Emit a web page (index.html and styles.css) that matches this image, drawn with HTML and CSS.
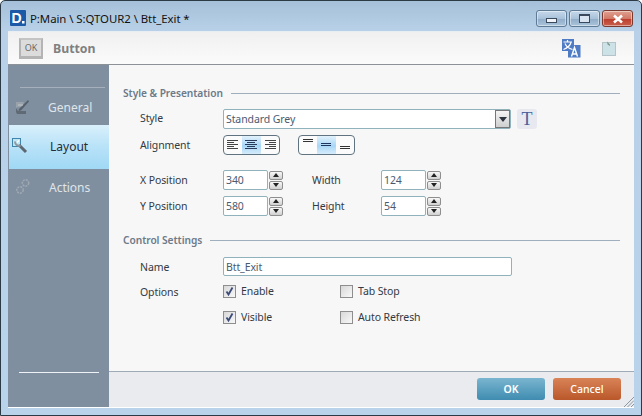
FILE: index.html
```html
<!DOCTYPE html>
<html lang="en">
<head>
<meta charset="utf-8">
<title>Btt_Exit</title>
<link rel="stylesheet" href="styles.css">
</head>
<body>
<div class="window">
  <div class="titlebar">
    <svg class="app-icon" width="16" height="16" viewBox="0 0 16 16"><rect width="16" height="16" rx="1" fill="#1c5aa8"/><text x="1.500" y="13" class="app-d">D</text><rect x="12" y="11" width="2.500" height="2.500" fill="#fff"/></svg>
    <span class="title">P:Main \ S:QTOUR2 \ Btt_Exit *</span>
    <div class="caption">
      <div class="cap cap-min"><span class="glyph-min"></span></div>
      <div class="cap cap-max"><span class="glyph-max"></span></div>
      <div class="cap cap-close"><svg width="14" height="10" viewBox="0 0 14 10"><path d="M3 1.500 L11 8.500 M11 1.500 L3 8.500" stroke="#fff" stroke-width="2.600"/></svg></div>
    </div>
  </div>
  <div class="client">
    <header class="head">
      <div class="ok-icon">OK</div>
      <span class="head-title">Button</span>
      <svg class="translate" width="19" height="19" viewBox="0 0 19 19">
        <path d="M0 0H12V6H18.500V18.500H6V12H0Z" fill="#4f7cc4"/>
        <path d="M1.500 3H10M5.500 1V3M3 4.500C4.500 8 7 9.500 10.500 10.500M9 3.500C8 7 5.500 9 1.500 10.500" stroke="#fff" stroke-width="1.200" fill="none"/>
        <path d="M9.500 17.500L12.500 8.500L15.500 17.500M10.500 15H14.500" stroke="#fff" stroke-width="1.400" fill="none"/>
      </svg>
      <svg class="note" width="14" height="15" viewBox="0 0 14 15"><rect x="0.500" y="1.500" width="13" height="13" fill="#cde2e6" stroke="#b4c4c8"/><path d="M5 0.500L8 3.500V5L5.500 3.500Z" fill="#7f998f"/></svg>
    </header>
    <div class="body">
      <nav class="side">
        <div class="side-rule"></div>
        <div class="nav-item nav-general">
          <svg class="nav-icon" width="15" height="16" viewBox="0 0 15 16"><path d="M1 9L3 12H11V15H2L1 13Z" fill="#5f6a75"/><path d="M1 3H9L7 8H3L1 9Z" fill="#99a2ab"/><path d="M4 10L13 1L14 2.500L6 11.500L3.500 12Z" fill="#56606b"/><path d="M3 6H8" stroke="#c0c7cd"/></svg>
          <span>General</span>
        </div>
        <div class="nav-item nav-layout">
          <svg class="nav-icon" width="16" height="16" viewBox="0 0 16 16"><rect x="0.500" y="0.500" width="8" height="8" fill="#bfe4f2" stroke="#3f85ad"/><path d="M7 7L14 14" stroke="#5d6772" stroke-width="3"/><path d="M3 3.500C3 7 6 8.500 8.500 7.500" stroke="#8e98a2" stroke-width="2" fill="none"/><path d="M7 2.500L5 4.500" stroke="#fff" stroke-width="1.400"/></svg>
          <span>Layout</span>
        </div>
        <div class="nav-item nav-actions">
          <svg class="nav-icon" width="16" height="17" viewBox="0 0 16 17"><circle cx="10.500" cy="5" r="3.200" fill="none" stroke="#a0a9b2" stroke-width="1.500" stroke-dasharray="2 1"/><circle cx="5" cy="12" r="3.200" fill="none" stroke="#a0a9b2" stroke-width="1.500" stroke-dasharray="2 1"/></svg>
          <span>Actions</span>
        </div>
        <div class="side-spacer"></div>
        <div class="side-foot"></div>
      </nav>
      <div class="main">
        <section class="content">
          <h2 class="sect sect-first"><span>Style &amp; Presentation</span><i></i></h2>
          <div class="row row-style">
            <label class="lbl lbl-up">Style</label>
            <div class="field select">
              <span class="val">Standard Grey</span>
              <span class="drop"><b></b></span>
            </div>
            <div class="t-btn">T</div>
          </div>
          <div class="row row-align">
            <label class="lbl">Alignment</label>
            <div class="seg">
              <span class="seg-btn"><svg width="12" height="10" viewBox="0 0 12 10"><path d="M0 .5H11M0 2.500H7M0 4.500H11M0 6.500H7M0 8.500H11" stroke="#444"/></svg></span>
              <span class="seg-btn on"><svg width="12" height="10" viewBox="0 0 12 10"><path d="M0 .5H12M2 2.500H10M0 4.500H12M2 6.500H10M0 8.500H12" stroke="#2a3a5a"/></svg></span>
              <span class="seg-btn"><svg width="12" height="10" viewBox="0 0 12 10"><path d="M1 .5H12M5 2.500H12M1 4.500H12M5 6.500H12M1 8.500H12" stroke="#444"/></svg></span>
            </div>
            <div class="seg seg-v">
              <span class="seg-btn"><svg width="12" height="14" viewBox="0 0 12 14"><path d="M1 1.500H11M1 3.500H11" stroke="#333"/></svg></span>
              <span class="seg-btn on"><svg width="12" height="14" viewBox="0 0 12 14"><path d="M1 5.500H11M1 7.500H11" stroke="#1f3560"/></svg></span>
              <span class="seg-btn"><svg width="12" height="14" viewBox="0 0 12 14"><path d="M1 8.500H11M1 10.500H11" stroke="#333"/></svg></span>
            </div>
          </div>
          <div class="row row-pos1">
            <label class="lbl">X Position</label>
            <div class="spin"><div class="field num">340</div><div class="arrows"><span class="up"></span><span class="down"></span></div></div>
            <label class="lbl2">Width</label>
            <div class="spin"><div class="field num">124</div><div class="arrows"><span class="up"></span><span class="down"></span></div></div>
          </div>
          <div class="row row-pos2">
            <label class="lbl">Y Position</label>
            <div class="spin"><div class="field num">580</div><div class="arrows"><span class="up"></span><span class="down"></span></div></div>
            <label class="lbl2">Height</label>
            <div class="spin"><div class="field num">54</div><div class="arrows"><span class="up"></span><span class="down"></span></div></div>
          </div>
          <h2 class="sect sect-second"><span>Control Settings</span><i></i></h2>
          <div class="row row-name">
            <label class="lbl">Name</label>
            <div class="field name"><span class="val">Btt_Exit</span></div>
          </div>
          <div class="row row-opt1">
            <label class="lbl lbl-down">Options</label>
            <div class="check c1"><span class="box"><svg width="11" height="11" viewBox="0 0 11 11"><path d="M2.500 5.500L4.500 8.500L8.500 1.500" stroke="#3c4c7a" stroke-width="1.800" fill="none"/></svg></span>Enable</div>
            <div class="check"><span class="box"></span>Tab Stop</div>
          </div>
          <div class="row row-opt2">
            <span class="lbl"></span>
            <div class="check c1"><span class="box"><svg width="11" height="11" viewBox="0 0 11 11"><path d="M2.500 5.500L4.500 8.500L8.500 1.500" stroke="#3c4c7a" stroke-width="1.800" fill="none"/></svg></span>Visible</div>
            <div class="check"><span class="box"></span>Auto Refresh</div>
          </div>
        </section>
        <footer class="foot">
          <div class="btn btn-ok">OK</div>
          <div class="btn btn-cancel">Cancel</div>
          <svg class="grip" width="11" height="11" viewBox="0 0 11 11"><path d="M1 11L11 1M4.500 11L11 4.500M8 11L11 8" stroke="#8c96a0"/></svg>
        </footer>
      </div>
    </div>
  </div>
</div>
</body>
</html>
```
FILE: styles.css
```css
* { box-sizing: border-box; }
html, body { margin: 0; padding: 0; }
body { width: 642px; height: 416px; overflow: hidden; background: #fff; font-family: "Noto Sans", "Liberation Sans", sans-serif; font-size: 10.500px; letter-spacing: -0.1px; color: #3d4450; }
.window { width: 642px; height: 416px; display: flex; flex-direction: column; border: 1px solid #2b3a44; border-radius: 5px 5px 0 0; background: linear-gradient(180deg, #a5c0d9 0, #b8d1e8 30px, #b9d3ea 100%); padding: 0 7px 7px 7px; }
.titlebar { height: 30px; flex: none; display: flex; align-items: flex-start; position: relative; }
.app-icon { margin: 9px 0 0 2px; flex: none; }
.app-d { font: bold 14px "Liberation Sans", sans-serif; fill: #fff; letter-spacing: 0; }
.title { margin: 9px 0 0 4px; font-size: 11.400px; line-height: 17px; color: #111; letter-spacing: -0.05px; }
.caption { position: absolute; right: 1px; top: 9px; display: flex; gap: 2px; }
.cap { width: 31px; height: 17px; display: flex; align-items: center; justify-content: center; border: 1px solid #5f7a94; border-radius: 3px; background: linear-gradient(180deg, #c5d8ea 0, #a9c2da 50%, #8fabc6 51%, #aac4dc 100%); box-shadow: inset 0 0 0 1px rgba(255,255,255,.45); }
.cap-close { border-color: #7a3a30; background: linear-gradient(180deg, #e0a090 0, #d27a68 50%, #bb3c2c 51%, #c9604c 100%); }
.glyph-min { width: 11px; height: 5px; margin-top: 4px; border: 1px solid #3a4a5c; background: #f0f4f8; }
.glyph-max { width: 11px; height: 9px; border: 2px solid #3a4a5c; background: #d8e4f0; border-width: 2px 1px 1px; }
.client { flex: 1; min-height: 0; display: flex; flex-direction: column; background: #f7f7f7; border-bottom: 1px solid #fff; }
.head { height: 34px; flex: none; display: flex; align-items: center; background: linear-gradient(180deg, #f0f0f0 0, #fbfbfb 100%); border-bottom: 1px solid #8c9298; border-top: 1px solid #e8eef4; padding-left: 11px; }
.ok-icon { width: 24px; height: 21px; display: flex; align-items: center; justify-content: center; background: #dcdcdc; border: 2px solid #b4b4b4; border-top-color: #c4c4c4; border-bottom-width: 3px; font-size: 9px; color: #6a6a6a; letter-spacing: 0; }
.head-title { margin-left: 10px; font-size: 12.300px; font-weight: 700; color: #808080; letter-spacing: 0; }
.translate { margin-left: auto; margin-right: 21px; }
.note { margin-right: 18px; }
.body { flex: 1; min-height: 0; display: flex; }
.side { width: 101px; flex: none; background: #7f8fa0; display: flex; flex-direction: column; }
.side-rule { height: 1px; margin: 22px 4px 0 12px; background: #a5b0bc; flex: none; }
.nav-item { display: flex; align-items: center; position: relative; font-size: 12px; flex: none; color: #dfe5ea; letter-spacing: 0; }
.nav-icon { position: absolute; left: 7px; }
.nav-general { height: 37px; padding: 2px 0 0 40px; }
.nav-general .nav-icon { top: 11px; }
.nav-layout { height: 44px; padding: 0 0 2px 41px; margin-left: 1px; color: #262d36; background: linear-gradient(180deg, #d9f0fb 0, #b8e2f8 50%, #a0d8f5 100%); }
.nav-layout .nav-icon { left: 3px; top: 13px; }
.nav-actions { height: 38px; padding: 0 0 2px 41px; }
.nav-actions .nav-icon { top: 9px; }
.side-spacer { flex: 1; }
.side-foot { height: 1px; margin: 0 10px 34px 11px; background: #eef2f5; flex: none; }
.main { flex: 1; min-width: 0; display: flex; flex-direction: column; }
.content { flex: 1; min-height: 0; padding: 21px 0 0 14px; background: #f7f7f7; }
.sect { display: flex; align-items: center; margin: 0; font-size: 10.200px; font-weight: 600; color: #6d7a88; height: 14px; padding-right: 14px; letter-spacing: -0.05px; }
.sect i { flex: 1; height: 1px; margin-left: 8px; background: #a0afbd; }
.sect-second { margin-top: 17px; }
.row { display: flex; align-items: center; padding-left: 17px; height: 20px; }
.row-style { margin-top: 9px; }
.row-align { margin-top: 6px; }
.row-pos1 { margin-top: 15px; }
.row-pos2 { margin-top: 6px; }
.row-name { margin-top: 10px; height: 19px; }
.row-opt1 { margin-top: 5px; }
.row-opt2 { margin-top: 6px; }
.lbl { width: 83px; flex: none; color: #333a44; }
.lbl-up { padding-bottom: 2px; }
.lbl-down { padding-top: 2px; }
.lbl2 { width: 69px; margin-left: 29px; flex: none; color: #333a44; }
.field { height: 20px; background: #fff; border: 1px solid #8fb2bd; border-radius: 2px; color: #4a5a70; display: flex; align-items: center; padding-left: 2px; }
.select { width: 288px; position: relative; }
.drop { position: absolute; right: 0; top: 0; bottom: 0; width: 15px; display: flex; align-items: center; justify-content: center; background: linear-gradient(180deg, #f4f4f4, #cfcfcf); border: 1px solid #777; }
.drop b { width: 0; height: 0; border: 4px solid transparent; border-top: 5px solid #2c3440; border-bottom: 0; }
.t-btn { width: 20px; height: 20px; margin-left: 6px; border-radius: 3px; background: #e8e9f0; font-family: "Liberation Serif", serif; font-size: 18px; line-height: 20px; text-align: center; color: #47619a; }
.seg { display: flex; height: 20px; width: 57px; border: 1px solid #5f7480; border-radius: 4px; background: #fbfbfb; overflow: hidden; }
.seg-v { margin-left: 18px; }
.seg-btn { flex: 1; display: flex; align-items: center; justify-content: center; }
.seg-btn.on { background: linear-gradient(180deg, #e2f2fc, #a8d6f6 55%, #d6ecfb); }
.spin { display: flex; align-items: center; }
.num { width: 45px; }
.arrows { width: 14px; margin-left: 1px; display: flex; flex-direction: column; gap: 1px; height: 19px; }
.arrows span { flex: 1; display: flex; align-items: center; justify-content: center; background: linear-gradient(180deg, #f8f8f8, #d0d0d0); border: 1px solid #8e8e8e; border-radius: 2px; }
.arrows .up::after { content: ""; border: 3px solid transparent; border-bottom: 4px solid #222; border-top: 0; }
.arrows .down::after { content: ""; border: 3px solid transparent; border-top: 4px solid #222; border-bottom: 0; }
.name { width: 289px; height: 19px; }
.check { display: flex; align-items: center; gap: 5px; width: 117px; color: #333a44; }
.box { width: 13px; height: 13px; flex: none; display: flex; align-items: center; justify-content: center; border: 1px solid #8e8e8e; background: linear-gradient(135deg, #d8d8d8, #f8f8f8); }
.foot { height: 36px; flex: none; display: flex; align-items: center; justify-content: flex-end; gap: 8px; padding: 0 13px 1px 0; background: #e9ebef; border-top: 1px solid #a0abb8; position: relative; }
.btn { width: 68px; height: 22px; border-radius: 3px; display: flex; align-items: center; justify-content: center; font-weight: 600; color: #fff; letter-spacing: 0; }
.btn-ok { background: linear-gradient(180deg, #7ab5d0, #3f8cb0); }
.btn-cancel { background: linear-gradient(180deg, #d98358, #b9582a); font-weight: 500; }
.grip { position: absolute; right: 0; bottom: 0; }
```
